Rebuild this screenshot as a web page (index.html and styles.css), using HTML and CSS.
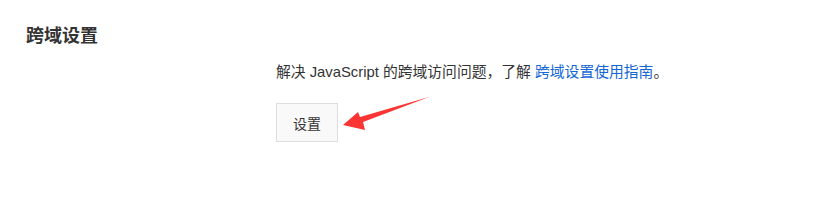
FILE: index.html
```html
<!DOCTYPE html>
<html lang="zh-CN">

<head>
  <meta charset="UTF-8">
  <title>跨域设置</title>
  <link rel="stylesheet" href="styles.css">
</head>

<body>
  <div class="section">
    <h2 class="section-title">跨域设置</h2>
    <div class="section-body">
      <p class="desc">解决 JavaScript 的跨域访问问题，了解 <a href="#" class="link">跨域设置使用指南</a>。</p>
      <div class="btn-wrap">
        <button class="setting-btn">设置</button>
        <svg class="arrow" width="90" height="36" viewBox="0 0 90 36">
          <polygon points="0,28 15,15 17,20 86,0 20,25 22,33" fill="#fc3434" />
        </svg>
      </div>
    </div>
  </div>
</body>

</html>
```

FILE: styles.css
```css
body {
  margin: 0;
  background-color: #fff;
  font-family: "Microsoft YaHei", "Liberation Sans", "Noto Sans CJK SC", sans-serif;
  color: #333;
}

.section {
  padding: 24px 26px;
}

.section-title {
  margin: 0;
  font-size: 18px;
  line-height: 24px;
  font-weight: bold;
  color: #333;
}

.section-body {
  padding-left: 250px;
  margin-top: 14px;
}

.desc {
  margin: 0;
  font-size: 14.8px;
  line-height: 20px;
}

.link {
  color: #1467d4;
  text-decoration: none;
}

.btn-wrap {
  position: relative;
  margin-top: 21px;
  display: inline-block;
}

.setting-btn {
  width: 62px;
  height: 39px;
  padding: 0;
  background-color: #f9f9f9;
  border: 1px solid #ddd;
  border-radius: 0;
  font-family: inherit;
  font-size: 14px;
  color: #333;
  cursor: pointer;
}

.arrow {
  position: absolute;
  left: 67px;
  top: -6px;
}
```
